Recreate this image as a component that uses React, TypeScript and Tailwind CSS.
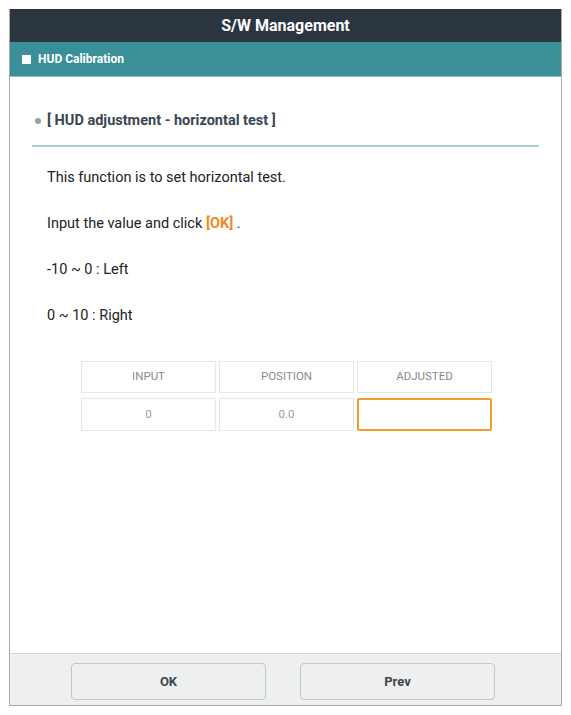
export default function App() {
  const lines = [
    <>This function is to set horizontal test.</>,
    <>
      Input the value and click <span className="font-bold text-[#f08a1c]">[OK]</span> .
    </>,
    <>-10 ~ 0 : Left</>,
    <>0 ~ 10 : Right</>,
  ];

  return (
    <div className="h-[715px] w-[571px] bg-white pl-[9px] pt-[9px] font-['Roboto',sans-serif]">
      <div className="flex h-[697px] w-[553px] flex-col border border-t-0 border-[#a9a9a9]">
        <div className="flex h-[33px] items-center justify-center bg-[#2b353f] text-[16px] font-bold text-white">
          S/W Management
        </div>
        <div className="flex h-[35px] items-center gap-[7px] border-b border-[#7fc3c7] bg-[#3a8f98] pl-[12px] text-[12px] font-bold text-white">
          <span className="h-[9px] w-[9px] bg-white" />
          HUD Calibration
        </div>

        <div className="flex-1 bg-white px-[22px] pt-[33px]">
          <div className="flex items-center gap-[6px] pl-[3px] text-[14.5px] font-bold text-[#3a4550]">
            <span className="h-[6px] w-[6px] rounded-full bg-[#9a9fa3]" />
            [ HUD adjustment - horizontal test ]
          </div>
          <div className="mt-[13px] h-[2px] bg-[#a6d0d3]" />

          <div className="flex flex-col gap-[28px] pl-[15px] pt-[22px] text-[14.5px] text-[#222]">
            {lines.map((l, i) => (
              <p key={i} className="leading-[18px]">
                {l}
              </p>
            ))}
          </div>

          <div className="ml-[49px] mt-[36px] grid w-[411px] grid-cols-3 gap-x-[3px] gap-y-[5px]">
            {["INPUT", "POSITION", "ADJUSTED"].map((h) => (
              <div
                key={h}
                className="flex h-[32px] items-center justify-center border border-[#e6e6e6] text-[11.5px] text-[#8a8a8a]"
              >
                {h}
              </div>
            ))}
            <div className="flex h-[33px] items-center justify-center border border-[#e6e6e6] text-[11.5px] text-[#9a9a9a]">
              0
            </div>
            <div className="flex h-[33px] items-center justify-center border border-[#e6e6e6] text-[11.5px] text-[#9a9a9a]">
              0.0
            </div>
            <div className="h-[33px] rounded-[2px] border-2 border-[#f09a30]" />
          </div>
        </div>

        <div className="flex h-[52px] items-start gap-[34px] border-t border-[#d4d8d8] bg-[#edf0ef] pl-[61px] pt-[9px]">
          <button className="h-[37px] w-[195px] rounded-[4px] border border-[#c4c8c8] bg-[#edf0ef] text-[13px] font-bold text-[#3d4650]">
            OK
          </button>
          <button className="h-[37px] w-[195px] rounded-[4px] border border-[#c4c8c8] bg-[#edf0ef] text-[13px] font-bold text-[#3d4650]">
            Prev
          </button>
        </div>
      </div>
    </div>
  );
}
